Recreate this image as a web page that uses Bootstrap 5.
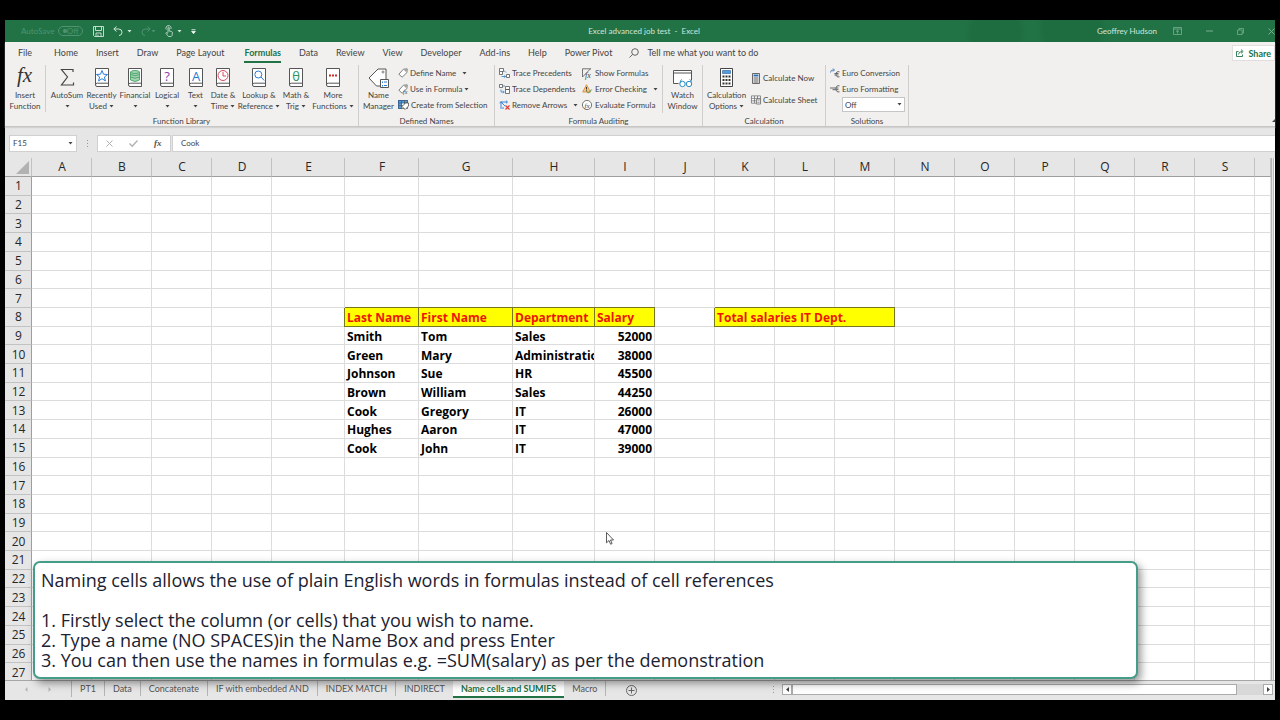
<!DOCTYPE html>
<html lang="en">
<head>
<meta charset="utf-8">
<meta name="viewport" content="width=device-width, initial-scale=1">
<title>Excel advanced job test - Excel</title>
<link href="https://cdn.jsdelivr.net/npm/bootstrap@5.3.0/dist/css/bootstrap.min.css" rel="stylesheet">
<style>
  :root { --ui: Lato, "Open Sans", sans-serif; --green: #217346; --chrome: #e6e6e6; --ribbon: #f1f0ef; --ink: #444; }
  body { background: #000; min-height: 100vh; padding: 20px 5px; font: 8px/11px var(--ui); color: var(--ink); }
  .workbook { background: var(--chrome); }
  svg { display: block; flex: none; overflow: visible; }
  button, input, select { font: inherit; color: inherit; }
  button { background: none; border: 0; padding: 0; }

  .titlebar { height: 22px; overflow: hidden; color: #d3e5da; background:
      radial-gradient(circle at 78% 60%, #1d6d41 0 24px, transparent 32px),
      radial-gradient(circle at 84% 40%, #1d6d41 0 28px, transparent 36px), var(--green); }
  .titlebar .side { flex: 1 1 0; }
  .quick { gap: 9px; padding-left: 10px; }
  .dim { color: #4f9370; }
  .toggle-pill { border: 1px solid #4f9370; border-radius: 6px; height: 10px; width: 25px; line-height: 8px; }
  .toggle-pill i { width: 4px; height: 4px; border-radius: 50%; background: #4f9370; }

  .ribbon { background: var(--ribbon); border-bottom: 1px solid #c8c6c4; box-shadow: 0 1px 1px #d2d2d2; }
  .tabs { height: 21px; font-size: 9px; padding-left: 4px; }
  .tabs a { color: var(--ink); text-decoration: none; padding: 0 9px; line-height: 22px; }
  .tabs a.active { color: var(--green); font-weight: 700; }
  .tabs a.active { padding-left: 11px; }
  .tabs a.active span { display: block; border-bottom: 2px solid var(--green); line-height: 16px; padding-top: 3px; }
  .tabs a.file { padding-right: 13px; }
  .share { background: #fff; border: 1px solid #e1dfdd; color: var(--green); font-weight: 700; height: 16px; padding: 0 3px; margin-top: 3px; }

  .groups { height: 63px; }
  .group { display: flex; flex-direction: column; border-right: 1px solid #d0cecc; margin-top: 2px; }
  .group > footer { text-align: center; margin-top: auto; line-height: 10px; }
  .big { display: flex; flex-direction: column; align-items: center; white-space: nowrap; }
  .big svg.ico { margin: 3px 0 2px; height: 20px; }
  .library { display: grid; grid-template-columns: 41px 42px 27px 40px 24px 33px 22px 50px 24px 50px; }
  .library .big:first-child { border-right: 1px solid #d0cecc; }
  .cmd { display: flex; align-items: center; gap: 2px; height: 16px; white-space: nowrap; }
  .cmd .caret { margin-left: 4px; }
  .names { width: 136px; }
  .names .big { width: 39px; }
  .auditing { width: 208px; }
  .auditing .trace { width: 84px; padding-left: 4px; }
  .auditing .check { width: 84px; padding-left: 3px; border-right: 1px solid #d0cecc; }
  .calc { width: 123px; }
  .calc .big { width: 47px; }
  .calc .pair { display: grid; align-content: start; gap: 6px; padding: 5px 0 0 1px; }
  .solutions { width: 83px; }
  .solutions > div { padding-left: 4px; }
  .pick { position: relative; width: 63px; height: 15px; margin-left: 12px; }
  .pick select { appearance: none; width: 100%; height: 15px; border: 1px solid #c6c6c6; background: #fff; padding: 0 2px; line-height: 12px; border-radius: 0; }
  .pick svg { position: absolute; right: 3px; top: 6px; pointer-events: none; }

  .formulabar { padding: 8px 0 6px 4px; }
  .formulabar > * { height: 17px; }
  .boxed { background: #fff; border: 1px solid #d0d0d0; }
  .boxed input { border: 0; background: none; outline: 0; min-width: 0; padding: 0; }
  .namebox { width: 68px; padding: 0 3px; }
  .splitter { width: 20px; }
  .fxbuttons { width: 74px; margin-right: 1px; }

  .sheet { flex: 1 1 0; min-height: 0; overflow: hidden; }
  .cells { table-layout: fixed; border-collapse: separate; border-spacing: 0; width: 100%; height: calc(100% + 2px); background: #fff; font: 12px/16px "Open Sans", sans-serif; color: #000; }
  .cells th, .cells td { padding: 0; overflow: hidden; white-space: nowrap; border: 0 solid #dcdcdc; border-width: 0 1px 1px 0; }
  .cells th { background: var(--chrome); font-weight: 400; text-align: center; color: #262626; border-color: #c2c2c2; padding-left: 1px; }
  .cells thead th { height: 19px; border-bottom-color: #9e9e9e; }
  .cells tbody th { border-right-color: #9e9e9e; padding-top: 1px; }
  .cells td { font-weight: 700; line-height: 15px; padding: 2px 2px 0; }
  .cells td.num { text-align: right; }
  .cells td.head { background: #ff0; color: #ee1505; border-color: #77771c; box-shadow: 0 -1px #77771c, -1px 0 #77771c; }
  .corner svg { margin: 1px 2px 0 auto; }
  .vscroll { width: 4px; border-left: 1px solid #b5b5b5; background: linear-gradient(90deg, #e6e6e6 1px, #b9b9b9 1px 2px, #fff 2px); }

  .sheettabs { height: 20px; border-top: 1px solid #a6a6a6; font-size: 9px; }
  .sheettabs a { color: #555; text-decoration: none; padding: 0 8px; line-height: 16px; height: 15px; border-right: 1px solid #b4b4b4; white-space: nowrap; }
  .sheettabs a.active { background: #fff; color: var(--green); font-weight: 700; border: 0; border-bottom: 2px solid var(--green); height: 17px; }
  .arrows { width: 67px; padding: 0 20px; border-right: 1px solid #b4b4b4; height: 16px; }
  .hscroll { flex: 0 1 500px; height: 11px; margin: 3px 2px 0 auto; }
  .hscroll button { width: 10px; height: 11px; border: 1px solid #ababab; background: #fff; }
  .hscroll .thumb { flex: 1; background: #fff; border: 1px solid #ababab; height: 11px; }
  .hscroll .rest { width: 26px; height: 11px; background: #d8d8d8; }

  .note { position: absolute; left: 28px; right: 137px; bottom: 21px; background: #fff; border: 2px solid #459c88; border-radius: 7px; box-shadow: 3px 4px 8px rgba(0,0,0,.42); padding: 7px 6px; font: 18px/20px "Open Sans", sans-serif; color: #1c2230; }
  .pointer { position: absolute; left: 601px; top: 512px; }
</style>
</head>
<body class="d-flex flex-column">
<svg width="0" height="0" class="position-absolute" aria-hidden="true">
  <defs>
    <symbol id="caret" viewBox="0 0 5 3"><path d="M.5 0h4L2.500 2.500z" fill="currentColor"/></symbol>
    <symbol id="book" viewBox="0 0 14 19"><path d="M.5.5h13v18H2q-1.500 0-1.500-1.700z" fill="#fff" stroke="#555"/><path d="M.5 16.800q0-1.600 1.800-1.600H13.500" fill="none" stroke="#555"/></symbol>
    <symbol id="tag" viewBox="0 0 12 12"><path d="M1 7.500 6.500 1.500 11 1l-.3 4.500L5 11z" fill="#fff" stroke="#555" stroke-width=".9"/><circle cx="9" cy="3" r=".8" fill="none" stroke="#555" stroke-width=".6"/></symbol>
  </defs>
</svg>

<main class="workbook position-relative flex-fill d-flex flex-column">
  <header class="titlebar d-flex align-items-center">
    <div class="side d-flex align-items-center">
      <span class="dim ms-3">AutoSave</span>
      <span class="toggle-pill dim d-flex align-items-center justify-content-between px-1 ms-1"><i></i>Off</span>
      <div class="quick d-flex align-items-center">
      <button aria-label="Save"><svg width="11" height="11" viewBox="0 0 11 11" fill="none" stroke="#d3e5da" stroke-width=".9"><path d="M.5.500h10v10h-9l-1-1zM2.500.500v4h6v-4M3 10.500V7h5v3.500M5 8.500v2"/></svg></button>
      <button class="d-flex align-items-center" aria-label="Undo"><svg width="10" height="10" viewBox="0 0 10 10" fill="none" stroke="#d3e5da"><path d="M3.500.500.800 3l2.700 2.500M1 3h4.500q3.500 0 3.500 3.200T6 9.500"/></svg><svg class="ms-1" width="5" height="3"><use href="#caret"/></svg></button>
      <button class="d-flex align-items-center dim" aria-label="Redo"><svg width="10" height="10" viewBox="0 0 10 10" fill="none" stroke="currentColor"><path d="M6.500.500 9.200 3 6.500 5.500M9 3H4.500Q1 3 1 6.200T4 9.500"/></svg><svg width="5" height="3"><use href="#caret"/></svg></button>
      <button class="d-flex align-items-center gap-1" aria-label="Touch mode"><svg width="8" height="12" viewBox="0 0 8 12" fill="none" stroke="#d3e5da" stroke-width=".8"><path d="M3 7.500V2.500q.6-.9 1.200 0V6l2.500.6q.8.300.7 1.200L7 10.500 6.200 11.500H3.500L.8 8.200q.4-1 1.200-.5l1 .8M1.300 4.500A2.600 2.600 0 1 1 6 4"/></svg><svg width="5" height="3"><use href="#caret"/></svg></button>
      <button aria-label="Customize Quick Access Toolbar"><svg width="5" height="5" viewBox="0 0 5 5"><path d="M.5.500h4M.5 2.200h4L2.500 4.700z" fill="#fff" stroke="#fff" stroke-width=".6"/></svg></button>
      </div>
    </div>
    <div class="ps-2">Excel advanced job test &nbsp;-&nbsp; Excel</div>
    <div class="side d-flex align-items-center justify-content-end">
      <span>Geoffrey Hudson</span>
      <svg class="ms-3" width="9" height="8" viewBox="0 0 9 8" fill="none" stroke="#79ad91" stroke-width=".8"><path d="M.5.500h8v7h-8zM.5 2h8M4.500 6.500V3.500M3 4.700l1.500-1.400L6 4.700"/></svg>
      <svg class="ms-4" width="7" height="2" viewBox="0 0 7 2"><path d="M0 1h7" stroke="#79ad91"/></svg>
      <svg class="ms-4" width="7" height="7" viewBox="0 0 7 7" fill="none" stroke="#79ad91" stroke-width=".8"><path d="M.5 2h4.700v4.500H.500zM2 2V.500h4.500V5H5.200"/></svg>
      <svg class="ms-4" width="7" height="7" viewBox="0 0 7 7"><path d="m.5.500 6 6m0-6-6 6" stroke="#79ad91"/></svg>
    </div>
  </header>

  <section class="ribbon">
    <nav class="tabs d-flex">
      <a href="#" class="file">File</a><a href="#">Home</a><a href="#">Insert</a><a href="#">Draw</a><a href="#">Page Layout</a><a href="#" class="active"><span>Formulas</span></a><a href="#">Data</a><a href="#">Review</a><a href="#">View</a><a href="#">Developer</a><a href="#">Add-ins</a><a href="#">Help</a><a href="#">Power Pivot</a>
      <button class="d-flex align-items-center gap-2 ms-2"><svg width="10" height="10" viewBox="0 0 10 10" fill="none" stroke="#555" stroke-width=".9"><circle cx="6" cy="4" r="3.300"/><path d="M3.600 6.400.500 9.500"/></svg>Tell me what you want to do</button>
      <button class="share d-flex align-items-center gap-1 ms-auto"><svg width="8" height="8" viewBox="0 0 8 8" fill="none" stroke="#217346" stroke-width=".9"><path d="M2.500 2.500h-2v5h6v-2M2.500 5.500q.3-3 3.500-3M5 .600l2.200 1.900L5 4.400"/></svg>Share</button>
    </nav>
    <div class="groups d-flex">
      <div class="group">
        <div class="library" id="library"></div>
        <footer>Function Library</footer>
      </div>
      <div class="group names">
        <div class="d-flex">
          <button class="big"><svg class="ico" width="21" height="20" viewBox="0 0 21 20" fill="none" stroke="#555"><path d="M12 18H8.500L1 10l9-9h8v10" fill="#fff"/><circle cx="15" cy="4" r="1" stroke-width=".7"/><path d="M12.500 11.500h8v8h-8z" fill="#fff"/><path d="M14.500 13.500v1.500m0 2v1.500M16 14h3M16 17.500h3" stroke="#2b7cd3"/></svg><span>Name</span><span>Manager</span></button>
          <div>
            <button class="cmd"><svg width="10" height="10"><use href="#tag"/></svg>Define Name<svg class="caret" width="5" height="3"><use href="#caret"/></svg></button>
            <button class="cmd"><svg width="10" height="10"><use href="#tag"/><text x="5" y="10" font-size="6" font-style="italic" font-family="Liberation Serif" fill="#444">fx</text></svg>Use in Formula<svg width="5" height="3"><use href="#caret"/></svg></button>
            <button class="cmd"><svg width="11" height="10" viewBox="0 0 11 10" fill="none" stroke="#555" stroke-width=".8"><path d="M.5.500h9v8h-9z" fill="#fff"/><path d="M.5.500h3v8h-3zM.5.500h9v2.500h-9z" fill="#5b9bd5" stroke="#2f5f95"/><path d="M.5 5.700h9M6.500.500v8"/><path d="m4 6.500 3.500-3.500h3v3L7.200 9.500z" fill="#fff"/></svg>Create from Selection</button>
          </div>
        </div>
        <footer>Defined Names</footer>
      </div>
      <div class="group auditing">
        <div class="d-flex">
          <div class="trace">
            <button class="cmd"><svg width="11" height="10" viewBox="0 0 11 10" fill="none" stroke="#555" stroke-width=".8"><path d="M.5.500h4v3h-4zM.5 3.500v3h3v-3M7.500 6.500h3v3h-3z" fill="#fff"/><path d="M2.500 8.500h4m-1.200-1.300L6.700 8.500 5.300 9.800M5 2.500l2 2" stroke="#2b7cd3"/></svg>Trace Precedents</button>
            <button class="cmd"><svg width="11" height="10" viewBox="0 0 11 10" fill="none" stroke="#555" stroke-width=".8"><path d="M.5.500h3v3h-3zM6.500 2.500h4v3h-4zM6.500 5.500h4v4h-4z" fill="#fff"/><path d="M2 5.500v2.500h3M4 6.700 5.300 8 4 9.300M4 2h2" stroke="#2b7cd3"/></svg>Trace Dependents</button>
            <button class="cmd"><svg width="11" height="10" viewBox="0 0 11 10" fill="none" stroke="#2b7cd3" stroke-width=".9"><path d="M2 9V2h6M.7 3.300 2 1.500l1.300 1.800M3 3l3 3M7 .700 8.500 2 7 3.300M3 8h2"/><path d="m6.500 5.500 4 4m0-4-4 4" stroke="#e03c31" stroke-width="1.200"/></svg>Remove Arrows<svg class="caret" width="5" height="3"><use href="#caret"/></svg></button>
          </div>
          <div class="check">
            <button class="cmd"><svg width="11" height="10" viewBox="0 0 11 10" fill="none" stroke="#555" stroke-width=".8"><path d="M.5 9V.800h8.500M.5 9 8.500.800"/><text x="3" y="9.500" font-size="8" font-style="italic" font-family="Liberation Serif" fill="#444" stroke="none">fx</text></svg>Show Formulas</button>
            <button class="cmd"><svg width="11" height="10" viewBox="0 0 11 10"><path d="M4.500.700 8.500 8H.700z" fill="#f7c98b" stroke="#d98324" stroke-width=".8"/><path d="M4.500 3v2.500M4.500 6.300v1" stroke="#333"/><path d="m5 7.500 1.500 1.700L9.700 5.500" fill="none" stroke="#3a9b5c"/></svg>Error Checking<svg class="caret" width="5" height="3"><use href="#caret"/></svg></button>
            <button class="cmd"><svg width="11" height="10" viewBox="0 0 11 10"><circle cx="5" cy="5" r="4.600" fill="#fff" stroke="#555" stroke-width=".8"/><text x="2.500" y="7.500" font-size="7" font-style="italic" font-family="Liberation Serif" fill="#444">fx</text></svg>Evaluate Formula</button>
          </div>
          <button class="big flex-fill"><svg class="ico" width="20" height="20" viewBox="0 0 20 20" fill="none" stroke="#555"><path d="M.5 15.500V2.500h18v10M.5 5h18M.5 15.500h5" fill="#fff"/><path d="M7 15.500q.3-4 2-4m9.500 4q-.3-4-2-4" stroke="#2b8fc4"/><circle cx="9.500" cy="16" r="2.700" fill="#fff" stroke="#2b8fc4"/><circle cx="16" cy="16" r="2.700" fill="#fff" stroke="#2b8fc4"/></svg><span>Watch</span><span>Window</span></button>
        </div>
        <footer>Formula Auditing</footer>
      </div>
      <div class="group calc">
        <div class="d-flex">
          <button class="big"><svg class="ico" width="13" height="20" viewBox="0 0 13 20"><path d="M.5.500h12v18H.500z" fill="#fff" stroke="#444"/><path d="M2.500 2.500h8v3h-8z" fill="#5b9bd5" stroke="#2f6fb0" stroke-width=".7"/><path d="M2.500 8.500h8M2.500 12h8M2.500 15.500h8" stroke="#333" stroke-width="2" stroke-dasharray="2 1"/></svg><span>Calculation</span><span>Options <svg class="d-inline align-middle" width="5" height="3"><use href="#caret"/></svg></span></button>
          <div class="pair">
            <button class="cmd"><svg width="10" height="11" viewBox="0 0 10 11"><path d="M1.500.500h7v10h-7z" fill="#fff" stroke="#444" stroke-width=".8"/><path d="M2.500 2.500h5" stroke="#2f6fb0" stroke-width="2"/><path d="M2.500 5h5m-5 2h5m-5 2h5" stroke="#555"/></svg>Calculate Now</button>
            <button class="cmd"><svg width="10" height="10" viewBox="0 0 11 10" fill="#fff" stroke="#666" stroke-width=".8"><path d="M.5.500h10v8h-10zM.5 3.200h10M.5 5.900h10M3.800.500v8M7.200.500v8"/><path d="M6 4h4.500v5.500H6z"/><path d="M7 6h2.500M7 8h2.500"/></svg>Calculate Sheet</button>
          </div>
        </div>
        <footer>Calculation</footer>
      </div>
      <div class="group solutions">
        <div>
          <button class="cmd"><svg width="10" height="10" viewBox="0 0 10 10" fill="none" stroke="#666"><path d="M9.500 3.800Q6 3 6 6.300t3.500 2.500M4.500 5.500h4M4.500 7h4"/><path d="M.5 4.500Q.500 1.500 4 2M3 .500 4.500 2 3 3.500" stroke="#4a7fc1"/></svg>Euro Conversion</button>
          <button class="cmd"><svg width="10" height="10" viewBox="0 0 10 10" fill="none" stroke="#666"><path d="M9.500 1.800Q6 1 6 4.800t3.500 3M0 4h8.500M2.500 5.700h6"/></svg>Euro Formatting</button>
          <div class="pick"><select aria-label="Euro formatting"><option>Off</option></select><svg width="5" height="3"><use href="#caret"/></svg></div>
        </div>
        <footer>Solutions</footer>
      </div>
      <svg class="ms-auto mt-auto mb-1" width="3" height="3" viewBox="0 0 3 3"><path d="M0 3 3 0v3z" fill="#444"/></svg>
    </div>
  </section>

  <section class="formulabar d-flex">
    <div class="boxed namebox d-flex align-items-center"><input class="w-100" value="F15" aria-label="Name box"><svg width="5" height="3"><use href="#caret"/></svg></div>
    <div class="splitter d-flex align-items-center justify-content-center"><svg width="1" height="7" viewBox="0 0 1 7"><path d="M.5 0v7" stroke="#999" stroke-dasharray="1 2"/></svg></div>
    <div class="boxed fxbuttons d-flex align-items-center justify-content-around">
      <button aria-label="Cancel"><svg width="7" height="7" viewBox="0 0 7 7"><path d="m.5.500 6 6m0-6-6 6" stroke="#b0b0b0"/></svg></button>
      <button aria-label="Enter"><svg width="9" height="7" viewBox="0 0 9 7"><path d="m.5 3.500 2.700 2.800L8.500.500" fill="none" stroke="#b0b0b0" stroke-width="1.300"/></svg></button>
      <button aria-label="Insert function"><svg width="8" height="9" viewBox="0 0 8 9"><text x="0" y="7" font-size="9" font-style="italic" font-weight="700" font-family="Liberation Serif" fill="#555">fx</text></svg></button>
    </div>
    <div class="boxed flex-fill d-flex align-items-center ps-2 border-end-0"><input class="w-100" value="Cook" aria-label="Formula bar"></div>
  </section>

  <section class="sheet d-flex">
    <table class="cells">
      <colgroup id="cols"></colgroup>
      <thead><tr id="letters"></tr></thead>
      <tbody id="grid"></tbody>
    </table>
    <div class="vscroll"></div>
  </section>

  <nav class="sheettabs d-flex">
    <div class="arrows d-flex align-items-center justify-content-between"><svg width="3" height="5" viewBox="0 0 3 5"><path d="M2.500 0v5L0 2.500z" fill="#b5b5b5"/></svg><svg width="3" height="5" viewBox="0 0 3 5"><path d="M.5 0v5L3 2.500z" fill="#b5b5b5"/></svg></div>
    <a href="#">PT1</a><a href="#">Data</a><a href="#">Concatenate</a><a href="#">IF with embedded AND</a><a href="#">INDEX MATCH</a><a href="#" class="border-0">INDIRECT</a><a href="#" class="active">Name cells and SUMIFS</a><a href="#">Macro</a>
    <button class="ms-3 px-1" aria-label="New sheet"><svg width="11" height="11" viewBox="0 0 11 11" fill="none" stroke="#666"><circle cx="5.500" cy="5.500" r="5"/><path d="M5.500 2.500v6M2.500 5.500h6"/></svg></button>
    <div class="hscroll d-flex">
      <svg class="my-auto" width="1" height="7" viewBox="0 0 1 7"><path d="M.5 0v7" stroke="#999" stroke-dasharray="1 2"/></svg>
      <button class="ms-2" aria-label="Scroll left"><svg class="mx-auto" width="3" height="5" viewBox="0 0 3 5"><path d="M3 0v5L0 2.500z" fill="#444"/></svg></button>
      <div class="thumb"></div><div class="rest"></div>
      <button aria-label="Scroll right"><svg class="mx-auto" width="3" height="5" viewBox="0 0 3 5"><path d="M0 0v5l3-2.500z" fill="#444"/></svg></button>
    </div>
  </nav>

  <svg class="pointer" width="8" height="13" viewBox="0 0 8 13"><path d="M.5.500v10.300L3 8.500l1.600 3.700 1.500-.6L4.500 8H7.500z" fill="#fff" stroke="#333" stroke-width=".8"/></svg>
  <aside class="note">Naming cells allows the use of plain English words in formulas instead of cell references<br><br>1. Firstly select the column (or cells) that you wish to name.<br>2. Type a name (NO SPACES)in the Name Box and press Enter<br>3. You can then use the names in formulas e.g. =SUM(salary) as per the demonstration</aside>
</main>

<script>
  // Function library buttons: label lines, drop-down flag, artwork
  const book = art => `<svg class="ico" width="14" height="20" viewBox="0 0 14 20"><use href="#book" width="14" height="19"/>${art}</svg>`;
  const glyph = (t, c) => book(`<text x="7" y="12.500" text-anchor="middle" font-size="13" font-family="Open Sans" fill="${c}">${t}</text>`);
  const caret = '<svg class="d-inline align-middle" width="5" height="3"><use href="#caret"/></svg>';
  const library = [
    ['Insert', 'Function', 0, '<svg class="ico" width="16" height="20" viewBox="0 0 16 20"><text x="0" y="14" font-size="21" font-style="italic" font-family="Liberation Serif" fill="#333">fx</text></svg>'],
    ['AutoSum', '', 1, '<svg class="ico" width="14" height="20" viewBox="0 0 14 20"><path d="M13 4V1.500H1.500L7.500 9l-6 8H13.500V14.500" fill="none" stroke="#444" stroke-width="1.200"/></svg>'],
    ['Recently', 'Used', 1, book('<path d="m7 2.500 1.500 3.700 4 .300-3.100 2.500 1 3.900L7 10.700l-3.400 2.200 1-3.900L1.500 6.500l4-.300z" fill="none" stroke="#2b7cd3"/>')],
    ['Financial', '', 1, book('<g fill="#a5d3b4" stroke="#3a9b5c" stroke-width=".8"><path d="M2.500 4v8q4.500 3 9 0V4"/><ellipse cx="7" cy="4" rx="4.500" ry="1.500"/><path d="M2.500 6.500q4.500 2.500 9 0M2.500 9q4.500 2.500 9 0" fill="none"/></g>')],
    ['Logical', '', 1, glyph('?', '#8a3fae')],
    ['Text', '', 1, glyph('A', '#2b7cd3')],
    ['Date &amp;', 'Time', 1, book('<circle cx="7" cy="7.500" r="5" fill="none" stroke="#d9485b"/><path d="M7 4v4h3" fill="none" stroke="#d9485b"/>')],
    ['Lookup &amp;', 'Reference', 1, book('<circle cx="6.300" cy="6.500" r="3.500" fill="none" stroke="#2b7cd3"/><path d="m9 9 3.200 3.500" stroke="#2b7cd3"/>')],
    ['Math &amp;', 'Trig', 1, glyph('θ', '#2f9460')],
    ['More', 'Functions', 1, book('<path d="M3 7.500h8" stroke="#c9302c" stroke-width="2" stroke-dasharray="2 1"/>')]
  ];
  document.getElementById('library').innerHTML = library.map(([a, b, d, art]) =>
    `<button class="big">${art}<span>${a}</span><span>${b} ${d ? caret : ''}</span></button>`).join('');

  // Worksheet
  const widths = [27, 60, 60, 60, 60, 73, 74, 94, 82, 60, 60, 60, 60, 60, 60, 60, 60, 60, 60, 60];
  document.getElementById('cols').innerHTML = widths.map(w => `<col style="width:${w}px">`).join('') + '<col>';
  const letters = 'ABCDEFGHIJKLMNOPQRS'.split('');
  document.getElementById('letters').innerHTML =
    '<th class="corner"><svg width="13" height="13" viewBox="0 0 13 13"><path d="M13 0v13H0z" fill="#b2b2b2"/></svg></th>' +
    letters.map(l => `<th scope="col">${l}</th>`).join('') + '<th></th>';
  const data = {
    8: ['Last Name', 'First Name', 'Department', 'Salary'],
    9: ['Smith', 'Tom', 'Sales', 52000], 10: ['Green', 'Mary', 'Administration', 38000],
    11: ['Johnson', 'Sue', 'HR', 45500], 12: ['Brown', 'William', 'Sales', 44250],
    13: ['Cook', 'Gregory', 'IT', 26000], 14: ['Hughes', 'Aaron', 'IT', 47000], 15: ['Cook', 'John', 'IT', 39000]
  };
  let rows = '';
  for (let r = 1; r <= 27; r++) {
    rows += `<tr><th scope="row">${r}</th>`;
    for (let c = 0; c < 20; c++) {
      const v = data[r] && c > 4 && c < 9 ? data[r][c - 5] : '';
      if (r === 8 && c === 10) { rows += '<td class="head" colspan="3">Total salaries IT Dept.</td>'; c = 12; continue; }
      rows += `<td${v === '' ? '' : r === 8 ? ' class="head"' : c === 8 ? ' class="num"' : ''}>${v}</td>`;
    }
    rows += '</tr>';
  }
  document.getElementById('grid').innerHTML = rows;
</script>
<script src="https://cdn.jsdelivr.net/npm/bootstrap@5.3.0/dist/js/bootstrap.bundle.min.js"></script>
</body>
</html>
